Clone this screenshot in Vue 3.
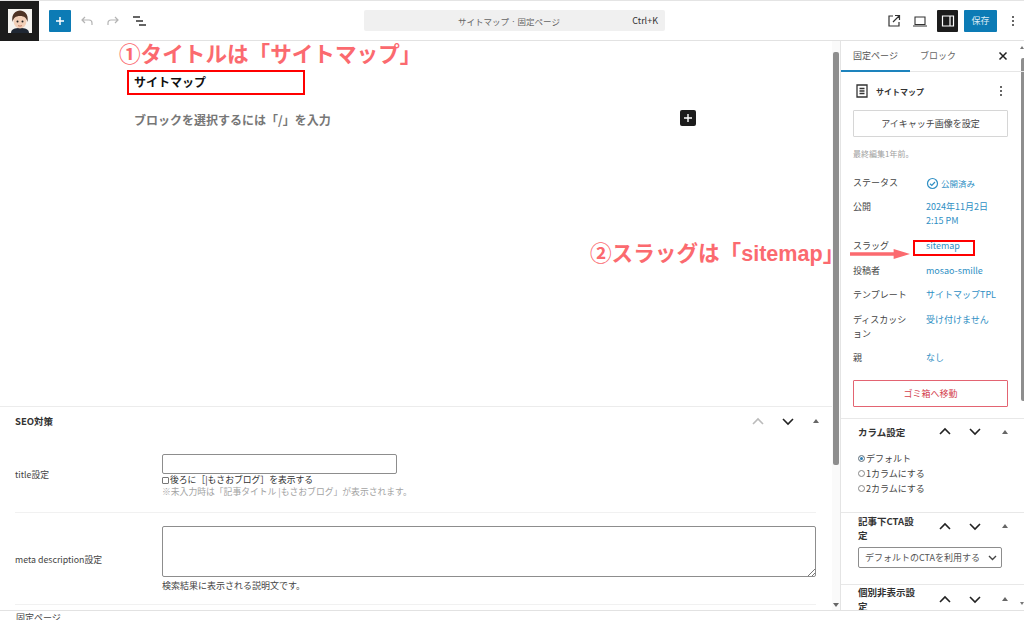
<script setup>
const settings = [
  { label: 'スラッグ', value: 'sitemap' },
  { label: '投稿者', value: 'mosao-smille' },
  { label: 'テンプレート', value: 'サイトマップTPL' },
  { label: 'ディスカッション', value: '受け付けません' },
  { label: '親', value: 'なし' }
]
const columns = ['デフォルト', '1カラムにする', '2カラムにする']
</script>

<template>
  <div class="page">
    <header class="topbar">
      <div class="logo">
        <svg width="24" height="24" viewBox="0 0 24 24">
          <rect width="24" height="24" fill="#f6f4f0" />
          <path d="M3 24c0-4 4-5 9-5s9 1 9 5z" fill="#1f2733" />
          <ellipse cx="12" cy="12" rx="6.500" ry="7.500" fill="#f2d0b8" />
          <path d="M4.500 13C3 5 8 1.500 12 1.500S21 5 19.500 13c-1-4-3-6-7.500-6s-6.500 2-7.500 6z" fill="#4e3324" />
          <circle cx="9.500" cy="12.500" r="1" fill="#222" />
          <circle cx="14.500" cy="12.500" r="1" fill="#222" />
          <path d="M10 16.500c1 .8 3 .8 4 0" stroke="#b5654f" fill="none" stroke-width=".8" />
        </svg>
      </div>
      <button class="add">
        <svg width="14" height="14" viewBox="0 0 14 14"><path d="M7 3v8M3 7h8" stroke="#fff" stroke-width="1.500" /></svg>
      </button>
      <svg class="tool first" width="12" height="10" viewBox="0 0 12 10" fill="none" stroke="#b4b4b4" stroke-width="1.200"><path d="M4 1 1 4l3 3M1 4h7c2 0 3 1.500 3 3v2" /></svg>
      <svg class="tool" width="12" height="10" viewBox="0 0 12 10" fill="none" stroke="#b4b4b4" stroke-width="1.200"><path d="M8 1l3 3-3 3M11 4H4C2 4 1 5.500 1 7v2" /></svg>
      <svg class="tool" width="13" height="10" viewBox="0 0 13 10" fill="none" stroke="#333" stroke-width="1.300"><path d="M0 1h7M3 5h7M6 9h7" /></svg>
      <div class="search-wrap">
        <div class="search">
          <span class="search-title">サイトマップ · 固定ページ</span>
          <span class="search-key">Ctrl+K</span>
        </div>
      </div>
      <svg class="right-icon" width="18" height="18" viewBox="0 0 18 18" fill="none" stroke="#333" stroke-width="1.200"><path d="M8 4H4v10h10v-4M10 3.500h4.500V8M14.500 3.500 8 10" /></svg>
      <svg class="right-icon" width="18" height="18" viewBox="0 0 18 18" fill="none" stroke="#333" stroke-width="1.100"><path d="M4 5h10v7.500H4zM2 14h14" /></svg>
      <div class="panel-toggle">
        <svg width="16" height="16" viewBox="0 0 16 16" fill="none" stroke="#fff" stroke-width="1.200"><path d="M2.500 3h11v10h-11zM10 3v10" /></svg>
      </div>
      <button class="save">保存</button>
      <div class="dots top-dots"><i></i><i></i><i></i></div>
    </header>

    <div class="body">
      <main class="editor">
        <div class="scroll-track"><div class="scroll-thumb"></div><span class="scroll-down"></span></div>
        <section class="canvas">
          <div class="title-block">
            <h1 class="post-title">サイトマップ</h1>
          </div>
          <div class="placeholder-row">
            <p class="placeholder">ブロックを選択するには「/」を入力</p>
            <span class="inserter">
              <svg width="12" height="12" viewBox="0 0 12 12"><path d="M6 2v8M2 6h8" stroke="#fff" stroke-width="1.400" /></svg>
            </span>
          </div>
        </section>
        <section class="metabox">
          <div class="meta-head">
            <h2>SEO対策</h2>
            <div class="meta-controls">
              <svg class="chev" width="14" height="9" viewBox="0 0 14 9" fill="none" stroke="#bbb" stroke-width="1.600"><path d="M2 7l5-5 5 5" /></svg>
              <svg class="chev" width="14" height="9" viewBox="0 0 14 9" fill="none" stroke="#222" stroke-width="1.600"><path d="M2 2l5 5 5-5" /></svg>
              <span class="tri"></span>
            </div>
          </div>
          <div class="meta-row row-title">
            <div class="meta-label">title設定</div>
            <div class="meta-field">
              <div class="fake-input"></div>
              <div class="check-line"><span class="check"></span>後ろに［|もさおブログ］を表示する</div>
              <div class="note">※未入力時は「記事タイトル |もさおブログ」が表示されます。</div>
            </div>
          </div>
          <div class="meta-row row-desc">
            <div class="meta-label">meta description設定</div>
            <div class="meta-field">
              <div class="fake-textarea">
                <svg width="8" height="8" viewBox="0 0 8 8" stroke="#777" fill="none"><path d="M1 8l7-7M5 8l3-3" /></svg>
              </div>
              <div class="help">検索結果に表示される説明文です。</div>
            </div>
          </div>
        </section>
      </main>

      <aside class="sidebar">
        <div class="side-scroll"><span class="side-up"></span><div class="side-thumb"></div><span class="side-down"></span></div>
        <div class="tabs">
          <span class="tab active">固定ページ</span>
          <span class="tab">ブロック</span>
          <svg class="close" width="10" height="10" viewBox="0 0 10 10" stroke="#222" stroke-width="1.500"><path d="M1.500 1.500l7 7M8.500 1.500l-7 7" /></svg>
        </div>
        <div class="doc">
          <div class="doc-head">
            <svg width="14" height="16" viewBox="0 0 14 16" fill="none" stroke="#333" stroke-width="1.300"><path d="M2 2h10v12H2zM4.500 5.500h5M4.500 8h5M4.500 10.500h5" /></svg>
            <strong>サイトマップ</strong>
            <div class="dots"><i></i><i></i><i></i></div>
          </div>
          <button class="featured">アイキャッチ画像を設定</button>
          <p class="edited">最終編集1年前。</p>
          <dl class="facts">
            <div class="fact status">
              <dt>ステータス</dt>
              <dd>
                <svg width="13" height="13" viewBox="0 0 13 13" fill="none" stroke="#2f8fc4" stroke-width="1.200"><circle cx="6.500" cy="6.500" r="5" /><path d="M4 6.800l1.800 1.600L9 5" /></svg>
                公開済み
              </dd>
            </div>
            <div class="fact publish">
              <dt>公開</dt>
              <dd>2024年11月2日<br />2:15 PM</dd>
            </div>
            <div v-for="s in settings" :key="s.label" class="fact">
              <dt>{{ s.label }}</dt>
              <dd>{{ s.value }}</dd>
            </div>
          </dl>
          <button class="trash">ゴミ箱へ移動</button>
        </div>
        <div class="panel panel-col">
          <div class="panel-head">
            <h3>カラム設定</h3>
            <svg class="chev" width="14" height="9" viewBox="0 0 14 9" fill="none" stroke="#222" stroke-width="1.600"><path d="M2 7l5-5 5 5" /></svg>
            <svg class="chev" width="14" height="9" viewBox="0 0 14 9" fill="none" stroke="#222" stroke-width="1.600"><path d="M2 2l5 5 5-5" /></svg>
            <span class="tri"></span>
          </div>
          <div class="radios">
            <div v-for="(c, i) in columns" :key="c" class="radio-line">
              <span class="radio" :class="{ on: i === 0 }"></span>{{ c }}
            </div>
          </div>
        </div>
        <div class="panel panel-cta">
          <div class="panel-head">
            <h3>記事下CTA設定</h3>
            <svg class="chev" width="14" height="9" viewBox="0 0 14 9" fill="none" stroke="#222" stroke-width="1.600"><path d="M2 7l5-5 5 5" /></svg>
            <svg class="chev" width="14" height="9" viewBox="0 0 14 9" fill="none" stroke="#222" stroke-width="1.600"><path d="M2 2l5 5 5-5" /></svg>
            <span class="tri"></span>
          </div>
          <div class="fake-select">
            デフォルトのCTAを利用する
            <svg width="9" height="6" viewBox="0 0 9 6" fill="none" stroke="#444" stroke-width="1.400"><path d="M1 1l3.500 3.500L8 1" /></svg>
          </div>
        </div>
        <div class="panel panel-hide">
          <div class="panel-head">
            <h3>個別非表示設定</h3>
            <svg class="chev" width="14" height="9" viewBox="0 0 14 9" fill="none" stroke="#222" stroke-width="1.600"><path d="M2 7l5-5 5 5" /></svg>
            <svg class="chev" width="14" height="9" viewBox="0 0 14 9" fill="none" stroke="#222" stroke-width="1.600"><path d="M2 2l5 5 5-5" /></svg>
            <span class="tri"></span>
          </div>
        </div>
      </aside>
    </div>

    <footer class="crumb">固定ページ</footer>

    <!-- annotations drawn on top of the screen -->
    <div class="note-red note-one">①タイトルは「サイトマップ」</div>
    <div class="red-box box-title"></div>
    <div class="note-red note-two">②スラッグは「sitemap」</div>
    <div class="red-box box-slug"></div>
    <svg class="arrow" width="60" height="10" viewBox="0 0 66 12" preserveAspectRatio="none"><path d="M0 4h48V0l18 6-18 6V8H0z" fill="#fb6a6f" /></svg>
  </div>
</template>

<style>
html, body { margin: 0; background: #fff; }
</style>

<style scoped>
.page {
  position: relative;
  width: 1024px;
  height: 620px;
  overflow: hidden;
  display: flex;
  flex-direction: column;
  background: #fff;
  color: #2c2c2c;
  font-family: "Noto Sans CJK JP", "Liberation Sans", sans-serif;
  font-size: 9px;
}
h1, h2, h3, p, dl, dd, dt { margin: 0; }
button { font-family: inherit; border: 0; padding: 0; }

.topbar {
  flex: 0 0 41px;
  box-sizing: border-box;
  height: 41px;
  display: flex;
  align-items: center;
  border-top: 1px solid #e4e4e4;
  border-bottom: 1px solid #e2e2e2;
}
.logo {
  width: 39px;
  height: 40px;
  background: #1c1c1c;
  display: flex;
  align-items: center;
  justify-content: center;
  flex: none;
}
.add {
  width: 22px;
  height: 22px;
  margin-left: 10px;
  background: #0c7bb5;
  border-radius: 1px;
  display: flex;
  align-items: center;
  justify-content: center;
}
.tool { margin-left: 14px; flex: none; }
.tool.first { margin-left: 10px; }
.search-wrap { flex: 1; display: flex; justify-content: flex-start; padding-left: 218px; }
.search {
  width: 301px;
  height: 21px;
  box-sizing: border-box;
  background: #f0f0f0;
  border-radius: 2px;
  display: flex;
  align-items: center;
  padding: 0 7px 0 94px;
  justify-content: space-between;
  color: #666;
  font-size: 8.500px;
}
.search-key { color: #333; font-size: 9px; }
.right-icon { flex: none; margin-right: 8px; }
.panel-toggle {
  width: 21px;
  height: 22px;
  background: #1c1c1c;
  border-radius: 1px;
  display: flex;
  align-items: center;
  justify-content: center;
  flex: none;
}
.save {
  width: 33px;
  height: 22px;
  margin-left: 6px;
  background: #0c7bb5;
  color: #dbeaf4;
  font-size: 9px;
  border-radius: 1px;
  flex: none;
}
.dots { display: flex; flex-direction: column; gap: 2px; width: 2px; }
.dots i { width: 2px; height: 2px; background: #333; border-radius: 50%; }
.top-dots { margin: 0 10px 0 15px; flex: none; }

.body { flex: 1; display: flex; min-height: 0; }

.editor {
  position: relative;
  width: 841px;
  box-sizing: border-box;
  border-right: 1px solid #e4e4e4;
  display: flex;
  flex-direction: column;
  overflow: hidden;
}
.scroll-track {
  position: absolute;
  top: 0;
  right: 0;
  width: 8px;
  height: 100%;
  background: #fafafa;
}
.scroll-thumb {
  margin: 11px 0 0 1px;
  width: 6px;
  height: 413px;
  background: #8e8e8e;
  border-radius: 2px;
}
.scroll-down {
  position: absolute;
  right: 1px;
  bottom: 3px;
  border-left: 3px solid transparent;
  border-right: 3px solid transparent;
  border-top: 4px solid #666;
}
.canvas {
  flex: 0 0 366px;
  box-sizing: border-box;
  padding: 30px 134px 0 134px;
  border-bottom: 1px solid #ececec;
  margin-right: 8px;
}
.post-title { font-size: 12px; font-weight: 700; line-height: 22px; color: #111; }
.placeholder-row {
  display: flex;
  align-items: center;
  justify-content: space-between;
  margin-top: 18px;
  padding-right: 2px;
}
.placeholder { font-size: 12px; font-weight: 700; color: #777; line-height: 18px; }
.inserter {
  width: 16px;
  height: 16px;
  margin-top: -4px;
  background: #1c1c1c;
  border-radius: 2px;
  display: flex;
  align-items: center;
  justify-content: center;
}
.metabox { flex: 1; padding: 0 24px 0 15px; }
.meta-head {
  height: 28px;
  display: flex;
  align-items: center;
  justify-content: space-between;
}
.meta-head h2 { font-size: 9.500px; font-weight: 700; color: #333; line-height: 28px; }
.meta-controls { display: flex; align-items: center; gap: 16px; margin-right: -3px; }
.chev { flex: none; }
.tri {
  display: inline-block;
  border-left: 3px solid transparent;
  border-right: 3px solid transparent;
  border-bottom: 4px solid #666;
  margin-left: 2px;
}
.meta-row {
  display: flex;
  align-items: center;
  border-bottom: 1px solid #f1f1f1;
  width: 801px;
  box-sizing: border-box;
}
.row-title { height: 78px; padding-top: 5px; }
.row-title .meta-label { margin-top: -4px; }
.row-desc { height: 92px; padding-top: 2px; }
.meta-label { width: 147px; flex: none; font-size: 8.800px; color: #444; }
.meta-field { flex: 1; }
.fake-input {
  width: 235px;
  height: 20px;
  box-sizing: border-box;
  border: 1px solid #8d8d8d;
  border-radius: 2px;
}
.check-line { font-size: 8.800px; line-height: 12px; margin-top: 0; color: #333; display: flex; align-items: center; }
.check {
  width: 5px;
  height: 5px;
  border: 1px solid #777;
  border-radius: 1px;
  margin-right: 1px;
  flex: none;
}
.note { font-size: 8.800px; line-height: 12px; color: #a3a3a3; }
.fake-textarea {
  width: 100%;
  height: 51px;
  box-sizing: border-box;
  border: 1px solid #8d8d8d;
  border-radius: 2px;
  display: flex;
  align-items: flex-end;
  justify-content: flex-end;
}
.help { font-size: 9px; line-height: 14px; margin-top: 2px; color: #444; }

.sidebar {
  position: relative;
  flex: 1;
  min-width: 0;
  overflow: hidden;
}
.side-scroll {
  position: absolute;
  top: 0;
  right: 0;
  width: 3px;
  height: 100%;
}
.side-thumb {
  position: absolute;
  top: 17px;
  right: 0;
  width: 3px;
  height: 343px;
  background: #8e8e8e;
  border-radius: 2px 0 0 2px;
}
.side-up, .side-down {
  position: absolute;
  right: 0;
  border-left: 2px solid transparent;
  border-right: 2px solid transparent;
}
.side-up { top: 5px; border-bottom: 3px solid #777; }
.side-down { bottom: 5px; border-top: 3px solid #777; }
.tabs {
  height: 31px;
  box-sizing: border-box;
  display: flex;
  align-items: center;
  position: relative;
  border-bottom: 1px solid #e6e6e6;
  font-size: 9px;
  color: #666;
}
.tab { width: 69px; text-align: center; line-height: 30px; box-sizing: border-box; }
.tab.active { color: #555; border-bottom: 2px solid #1d83bd; height: 31px; margin-bottom: -1px; }
.tab + .tab { width: auto; margin-left: 10px; }
.close { position: absolute; right: 16px; top: 10px; }
.doc { padding: 0 15px 0 12px; height: 347px; box-sizing: border-box; border-bottom: 1px solid #e8e8e8; }
.doc-head {
  display: flex;
  align-items: center;
  height: 38px;
  padding-left: 2px;
}
.doc-head strong { font-size: 8px; font-weight: 700; margin-left: 7px; flex: 1; color: #333; }
.doc-head .dots { margin-right: 7px; }
.featured {
  display: block;
  width: 155px;
  height: 27px;
  border: 1px solid #d6d6d6;
  background: #fff;
  font-size: 9px;
  color: #444;
  border-radius: 1px;
}
.edited { font-size: 8px; color: #a0a0a0; line-height: 12px; margin-top: 11px; }
.facts { margin-top: 16px; }
.fact { display: flex; font-size: 9px; line-height: 14px; height: 24px; }
.fact dt { width: 73px; flex: none; color: #444; padding-right: 13px; box-sizing: border-box; }
.fact dd { color: #2f8fc4; }
.status dd { display: flex; align-items: center; gap: 2px; height: 14px; font-size: 8.500px; }
.publish { height: 39px; }
.fact:nth-child(3) { height: 25px; }
.fact:nth-child(4) { height: 24px; }
.fact:nth-child(5) { height: 25px; }
.fact:nth-child(6) { height: 38px; }
.fact:nth-child(7) { height: 29px; }
.trash {
  display: block;
  width: 155px;
  height: 27px;
  border: 1px solid #e36472;
  border-radius: 1px;
  background: #fff;
  color: #d4414f;
  font-size: 9px;
}
.panel { padding: 0 17px; border-bottom: 1px solid #e8e8e8; }
.panel-head { display: flex; align-items: center; }
.panel-head h3 {
  width: 60px;
  flex: none;
  font-size: 9.500px;
  font-weight: 700;
  line-height: 14px;
  color: #333;
}
.panel-head .chev { margin-left: 20px; }
.panel-head .chev + .chev { margin-left: 16px; }
.panel-head .tri { margin-left: 20px; }
.panel-col { height: 94px; box-sizing: border-box; padding-top: 5px; }
.panel-cta { height: 72px; box-sizing: border-box; padding-top: 1px; }
.panel-cta .chev, .panel-cta .tri { margin-top: -4px; }
.panel-hide { padding-top: 0; border: 0; }
.panel-col .panel-head { height: 15px; }
.panel-col h3 { white-space: nowrap; }
.radios { margin-top: 12px; }
.radio-line { display: flex; align-items: center; height: 15px; font-size: 9px; color: #444; }
.radio {
  width: 5px;
  height: 5px;
  border: 1px solid #888;
  border-radius: 50%;
  margin-right: 1px;
}
.radio.on { background: #2f7fb5; box-shadow: inset 0 0 0 1px #fff; }
.fake-select {
  margin-top: 5px;
  width: 144px;
  height: 21px;
  box-sizing: border-box;
  border: 1px solid #8d8d8d;
  border-radius: 2px;
  padding: 0 4px 0 6px;
  display: flex;
  align-items: center;
  justify-content: space-between;
  font-size: 9px;
  color: #555;
  white-space: nowrap;
}

.crumb {
  flex: 0 0 10px;
  height: 10px;
  box-sizing: border-box;
  border-top: 1px solid #e2e2e2;
  padding-left: 16px;
  font-size: 9px;
  line-height: 13px;
  color: #444;
  overflow: hidden;
  background: #fff;
}

.note-red {
  position: absolute;
  color: #fb6a6f;
  font-weight: 700;
  font-size: 21.600px;
  line-height: 26px;
  white-space: nowrap;
  font-family: "Liberation Sans", "Noto Sans CJK JP", sans-serif;
}
.note-one { left: 119px; top: 42px; }
.note-two { left: 590px; top: 241px; }
.red-box {
  position: absolute;
  box-sizing: border-box;
  border: 2px solid #f00;
}
.box-title { left: 127px; top: 70px; width: 178px; height: 25px; }
.box-slug { left: 913px; top: 240px; width: 62px; height: 16px; }
.arrow { position: absolute; left: 850px; top: 249px; }
</style>
